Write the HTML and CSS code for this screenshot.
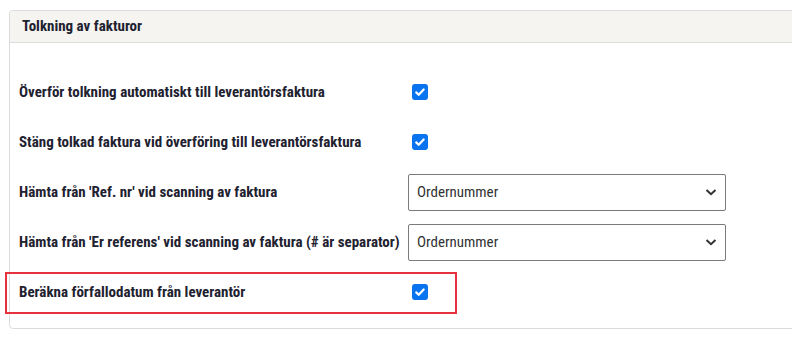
FILE: index.html
```html
<!DOCTYPE html>
<html lang="sv">
<head>
<meta charset="utf-8">
<link rel="stylesheet" href="styles.css">
</head>
<body>
<section class="card">
  <header class="card-head">Tolkning av fakturor</header>
  <div class="card-body">
    <div class="row">
      <span class="label">Överför tolkning automatiskt till leverantörsfaktura</span>
      <span class="check"><svg viewBox="0 0 16 16" width="16" height="16"><path d="M4.2 8.4l2.5 2.4 5-5.3" fill="none" stroke="#fff" stroke-width="2.2" stroke-linecap="round" stroke-linejoin="round"/></svg></span>
    </div>
    <div class="row">
      <span class="label">Stäng tolkad faktura vid överföring till leverantörsfaktura</span>
      <span class="check"><svg viewBox="0 0 16 16" width="16" height="16"><path d="M4.2 8.4l2.5 2.4 5-5.3" fill="none" stroke="#fff" stroke-width="2.2" stroke-linecap="round" stroke-linejoin="round"/></svg></span>
    </div>
    <div class="row">
      <span class="label">Hämta från 'Ref. nr' vid scanning av faktura</span>
      <div class="select"><span>Ordernummer</span><svg viewBox="0 0 14 14" width="14" height="14"><path d="M2.5 5l4.5 4.2L11.5 5" fill="none" stroke="#333" stroke-width="2"/></svg></div>
    </div>
    <div class="row">
      <span class="label">Hämta från 'Er referens' vid scanning av faktura (# är separator)</span>
      <div class="select"><span>Ordernummer</span><svg viewBox="0 0 14 14" width="14" height="14"><path d="M2.5 5l4.5 4.2L11.5 5" fill="none" stroke="#333" stroke-width="2"/></svg></div>
    </div>
    <div class="row highlight">
      <span class="label">Beräkna förfallodatum från leverantör</span>
      <span class="check"><svg viewBox="0 0 16 16" width="16" height="16"><path d="M4.2 8.4l2.5 2.4 5-5.3" fill="none" stroke="#fff" stroke-width="2.2" stroke-linecap="round" stroke-linejoin="round"/></svg></span>
    </div>
  </div>
</section>
</body>
</html>
```
FILE: styles.css
```css
html, body {
  margin: 0;
  padding: 0;
  background: #fff;
}
body {
  padding: 10px 0 0 9px;
  font-family: "Roboto Condensed", "Liberation Sans Narrow", Roboto, sans-serif;
  font-stretch: condensed;
  color: #212130;
}
.card {
  width: 800px;
  height: 319px;
  box-sizing: border-box;
  border: 1px solid #dcdcdc;
  border-radius: 4px;
}
.card-head {
  height: 32px;
  box-sizing: border-box;
  background: #f5f4f1;
  border-bottom: 1px solid #dcdcdc;
  border-radius: 4px 4px 0 0;
  padding-left: 12px;
  font-size: 15px;
  font-weight: 700;
  line-height: 31px;
}
.card-body {
  padding-top: 24px;
}
.row {
  position: relative;
  height: 50px;
  display: flex;
  align-items: center;
  padding-left: 9px;
}
.label {
  width: 389px;
  flex: none;
  font-size: 15px;
  font-weight: 700;
}
.check {
  margin-left: 4px;
  width: 16px;
  height: 16px;
  border-radius: 3px;
  background: #0a74f0;
  display: block;
}
.check svg { display: block; }
.select {
  width: 318px;
  height: 37px;
  box-sizing: border-box;
  border: 1px solid #7a7a7a;
  border-radius: 2px;
  display: flex;
  align-items: center;
  justify-content: space-between;
  padding: 0 7px 0 8px;
  font-size: 15px;
  color: #333;
}
.highlight::after {
  content: "";
  position: absolute;
  left: -5px;
  top: 5px;
  width: 448px;
  height: 38px;
  border: 2px solid #e5323e;
}
```
